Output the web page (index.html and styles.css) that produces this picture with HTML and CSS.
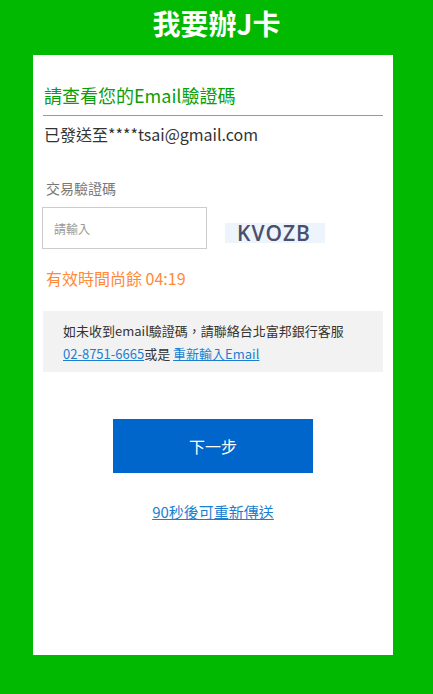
FILE: index.html
```html
<!DOCTYPE html>
<html lang="zh-Hant">
<head>
<meta charset="utf-8">
<title>我要辦J卡</title>
<link rel="stylesheet" href="styles.css">
</head>
<body>
<header class="top">我要辦J卡</header>
<main class="card">
  <h1 class="heading">請查看您的Email驗證碼</h1>
  <p class="sent">已發送至****tsai@gmail.com</p>
  <label class="label" for="code">交易驗證碼</label>
  <div class="code-row">
    <input id="code" class="code-input" type="text" placeholder="請輸入">
    <div class="captcha">KVOZB</div>
  </div>
  <p class="timer">有效時間尚餘 04:19</p>
  <div class="notice">
    如未收到email驗證碼，請聯絡台北富邦銀行客服<br>
    <a class="link" href="#">02-8751-6665</a>或是 <a class="link" href="#">重新輸入Email</a>
  </div>
  <div class="actions">
    <button class="next" type="button">下一步</button>
    <a class="resend" href="#">90秒後可重新傳送</a>
  </div>
</main>
</body>
</html>
```
FILE: styles.css
```css
html, body {
  margin: 0;
  padding: 0;
}
body {
  background: #00b900;
  height: 694px;
  font-family: "Noto Sans CJK TC", "Noto Sans", sans-serif;
  color: #333;
  overflow: hidden;
}
.top {
  height: 55px;
  line-height: 46px;
  text-align: center;
  color: #fff;
  font-size: 28px;
  font-weight: bold;
}
.card {
  box-sizing: border-box;
  margin-left: 33px;
  width: 360px;
  height: 600px;
  background: #fff;
  padding: 28px 10px 0 10px;
  display: flex;
  flex-direction: column;
}
.heading {
  margin: 0;
  font-size: 18px;
  font-weight: normal;
  line-height: 24px;
  color: #0a9e0a;
  padding: 0 0 8px 1px;
  border-bottom: 1px solid #999;
}
.sent {
  margin: 7px 0 0 1px;
  font-size: 16px;
  line-height: 22px;
  color: #333;
}
.label {
  margin: 33px 0 0 3px;
  font-size: 14px;
  line-height: 20px;
  color: #777;
}
.code-row {
  display: flex;
  align-items: flex-start;
  margin-top: 9px;
  margin-left: -1px;
}
.code-input {
  box-sizing: border-box;
  width: 165px;
  height: 42px;
  border: 1px solid #ccc;
  border-radius: 0;
  padding: 0 11px;
  font-family: "Noto Sans CJK TC", "Noto Sans", sans-serif;
  font-size: 12px;
  color: #333;
  outline: none;
}
.code-input::placeholder {
  color: #999;
}
.captcha {
  margin: 16px 0 0 18px;
  width: 100px;
  height: 20px;
  background: #eef4fc;
  color: #4b4f6b;
  font-family: "Open Sans", "Liberation Sans", sans-serif;
  font-size: 21px;
  font-weight: 600;
  line-height: 20px;
  letter-spacing: 1px;
  padding-left: 12px;
  box-sizing: border-box;
}
.timer {
  margin: 18px 0 0 3px;
  font-size: 16px;
  line-height: 22px;
  color: #ff8a3a;
}
.notice {
  margin-top: 22px;
  background: #f2f2f2;
  padding: 8px 20px 7px 20px;
  font-size: 13px;
  line-height: 23px;
  color: #333;
}
.link {
  color: #1b7fd1;
  text-decoration: underline;
}
.actions {
  display: flex;
  flex-direction: column;
  align-items: center;
}
.next {
  margin-top: 47px;
  width: 200px;
  height: 54px;
  border: none;
  background: #0066cc;
  color: #fff;
  font-family: "Noto Sans CJK TC", "Noto Sans", sans-serif;
  font-size: 16px;
  cursor: pointer;
}
.resend {
  margin-top: 29px;
  font-size: 15px;
  line-height: 20px;
  color: #1b7fd1;
  text-decoration: underline;
}
```
